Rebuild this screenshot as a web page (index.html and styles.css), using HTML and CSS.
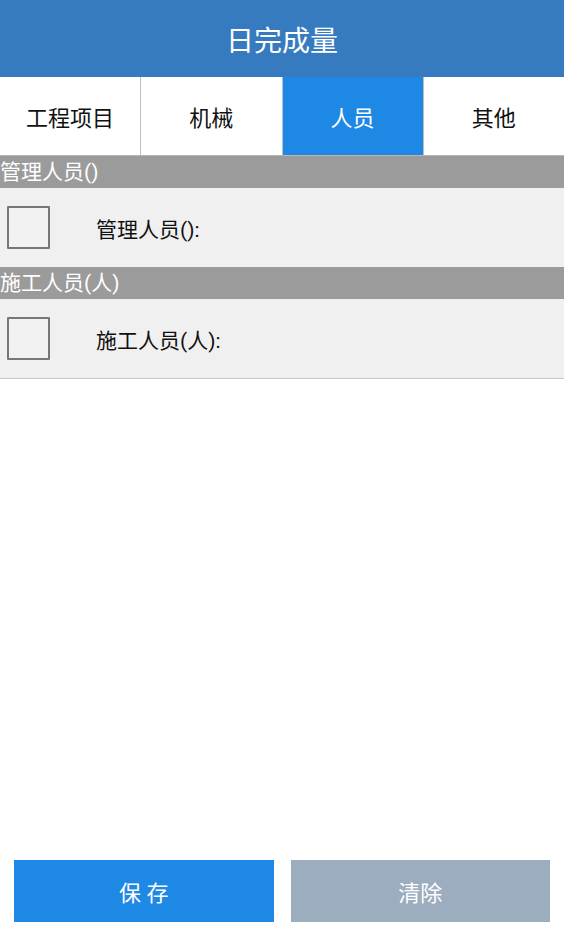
FILE: index.html
```html
<!DOCTYPE html>
<html lang="zh">
<head>
<meta charset="utf-8">
<title>日完成量</title>
<link rel="stylesheet" href="styles.css">
</head>
<body>
<div class="page">
  <header class="topbar">日完成量</header>
  <nav class="tabs">
    <div class="tab">工程项目</div>
    <div class="tab">机械</div>
    <div class="tab active">人员</div>
    <div class="tab">其他</div>
  </nav>
  <section class="group">
    <div class="group-title">管理人员()</div>
    <div class="row">
      <span class="check"></span>
      <span class="label">管理人员():</span>
    </div>
  </section>
  <section class="group last">
    <div class="group-title">施工人员(人)</div>
    <div class="row">
      <span class="check"></span>
      <span class="label">施工人员(人):</span>
    </div>
  </section>
  <div class="spacer"></div>
  <footer class="actions">
    <button class="btn save">保 存</button>
    <button class="btn clear">清除</button>
  </footer>
</div>
</body>
</html>
```
FILE: styles.css
```css
* { box-sizing: border-box; }
html, body { margin: 0; padding: 0; }
body {
  font-family: Roboto, "Noto Sans CJK SC", sans-serif;
  background: #ffffff;
  color: #111;
}
.page {
  display: flex;
  flex-direction: column;
  min-height: 100vh;
}
.topbar {
  height: 77px;
  background: #367bbf;
  color: #fff;
  font-size: 28px;
  display: flex;
  align-items: center;
  justify-content: center;
}
.tabs {
  display: flex;
  height: 79px;
  border-bottom: 1px solid #b5b5b5;
}
.tab {
  flex: 1;
  display: flex;
  align-items: center;
  justify-content: center;
  font-size: 22px;
  color: #111;
  border-right: 1px solid #bdbdbd;
}
.tab:last-child { border-right: none; }
.tab.active {
  background: #1e88e5;
  color: #fff;
}
.group-title {
  height: 32px;
  background: #9b9b9b;
  color: #fff;
  font-size: 21px;
  line-height: 32px;
  white-space: nowrap;
}
.row {
  height: 79px;
  background: #f0f0f0;
  display: flex;
  align-items: center;
  padding-left: 7px;
}
.group.last .row {
  border-bottom: 1px solid #c8c8c8;
  height: 80px;
}
.check {
  width: 43px;
  height: 43px;
  border: 2px solid #777;
  border-radius: 1px;
  background: #f2f2f2;
}
.label {
  margin-left: 46px;
  font-size: 21px;
  color: #111;
}
.spacer { flex: 1; }
.actions {
  display: flex;
  gap: 17px;
  padding: 0 14px 4px 14px;
}
.btn {
  flex: 1;
  height: 62px;
  border: none;
  font-family: inherit;
  font-size: 22px;
  color: #fff;
}
.btn.save { background: #1e88e5; }
.btn.clear { background: #9badbe; }
```
